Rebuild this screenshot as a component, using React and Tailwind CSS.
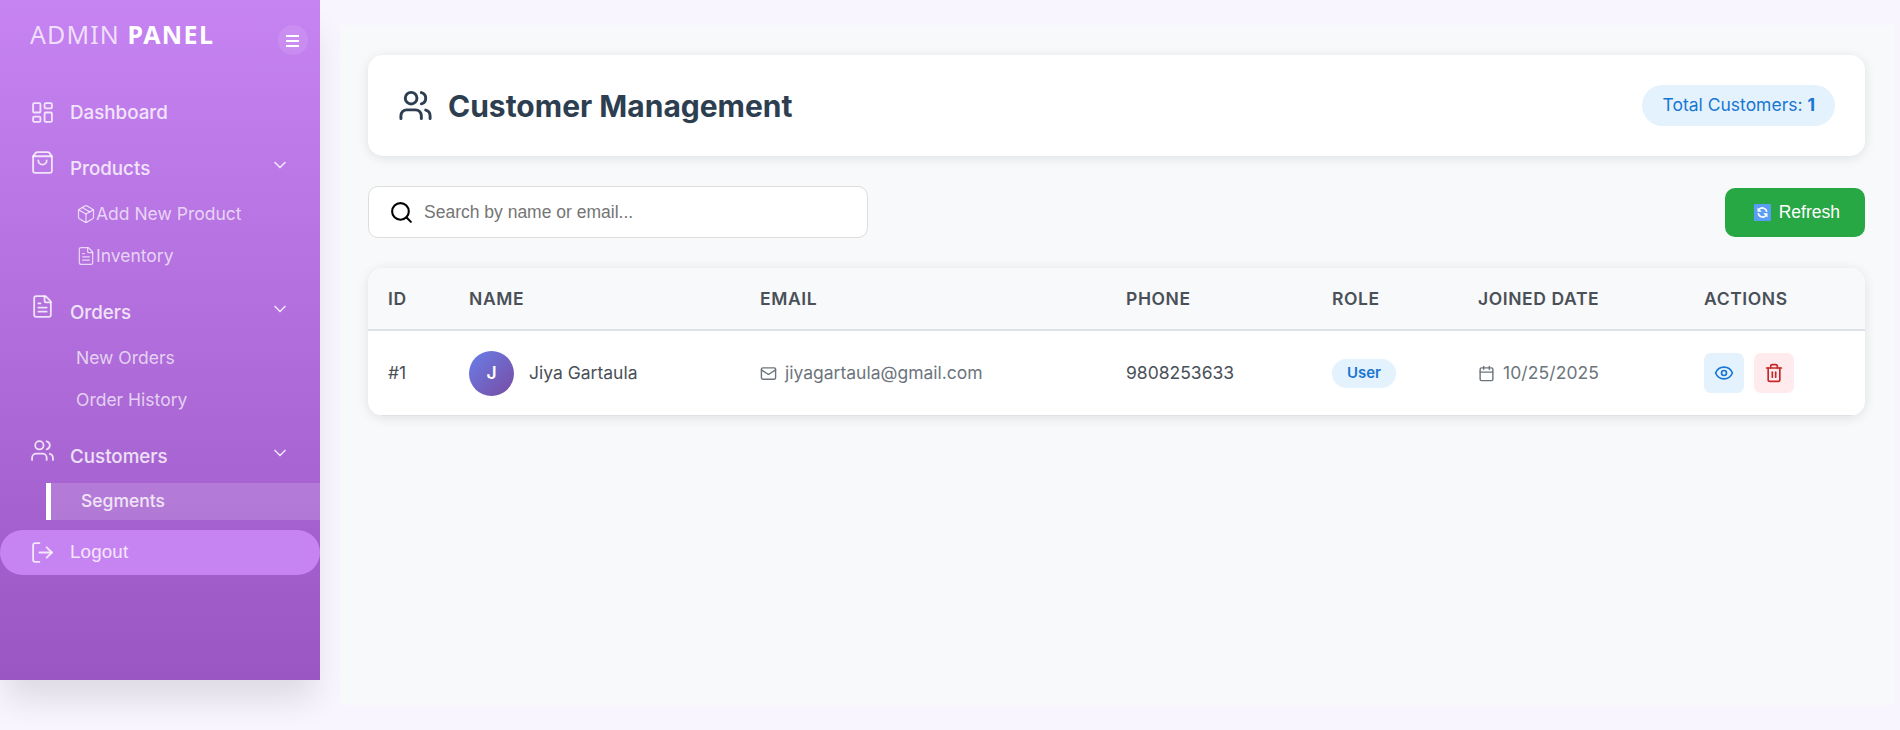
import { LayoutDashboard, ShoppingBag, Package, FileText, Users, LogOut, ChevronDown, Search, Mail, Calendar, Eye, Trash2 } from "lucide-react";

function Group({ icon: Icon, label }) {
  return (
    <div className="flex h-[54px] px-[30px]">
      <Icon className="mt-[11px] size-[25px]" strokeWidth={1.75} />
      <span className="ml-[15px] mt-[18px] text-[18.75px] font-medium leading-[24px]">{label}</span>
      <ChevronDown className="ml-auto mt-4 size-5" strokeWidth={2} />
    </div>
  );
}

function Sub({ icon: Icon, label }) {
  return (
    <div className="flex h-[42px] items-center pl-[76px] text-[17.5px] text-white/70">
      {Icon && <Icon className="size-5" strokeWidth={1.5} />}
      {label}
    </div>
  );
}

function MenuBars() {
  return (
    <svg className="mr-px mt-0.5 h-3 w-[13px]" viewBox="0 0 13 12" fill="currentColor">
      <rect width="13" height="2" />
      <rect y="5" width="13" height="2" />
      <rect y="10" width="13" height="2" />
    </svg>
  );
}

function Sidebar() {
  return (
    <aside className="flex h-[680px] w-[320px] shrink-0 flex-col bg-linear-to-b from-[#c683f2] to-[#9a57c4] text-white/80 shadow-[0_25px_31px_-6px_rgba(0,0,0,0.11)]">
      <div className="flex h-[86px] items-start justify-between pl-[30px] pr-3">
        <h1 className="mt-[18px] font-['Noto_Sans',sans-serif] text-[25px] font-normal leading-[32px] tracking-[1.1px] text-white/75">
          ADMIN <span className="font-bold tracking-[1.4px] text-white">PANEL</span>
        </h1>
        <button className="mt-[25px] flex size-[30px] items-center justify-center rounded-full bg-white/10 text-white">
          <MenuBars />
        </button>
      </div>
      <nav className="flex flex-col">
        <div className="flex h-[53px] items-center gap-[15px] pl-[30px] text-[18.75px] font-medium">
          <LayoutDashboard className="size-[25px]" strokeWidth={1.75} /><span className="pt-0.5">Dashboard</span>
        </div>
        <Group icon={ShoppingBag} label="Products" />
        <Sub icon={Package} label="Add New Product" />
        <Sub icon={FileText} label="Inventory" />
        <div className="mt-[6px]"><Group icon={FileText} label="Orders" /></div>
        <Sub label="New Orders" />
        <Sub label="Order History" />
        <div className="mt-[6px]"><Group icon={Users} label="Customers" /></div>
        <div className="ml-[46px] mt-[2px] flex h-[37px] items-center border-l-[5px] border-white bg-white/15 pl-[30px] text-[17.5px] font-medium">Segments</div>
        <div className="mt-[10px] flex h-[45px] items-center gap-[15px] rounded-full bg-[#c683f2] pl-[30px] font-['Liberation_Sans',sans-serif] text-[18.75px] tracking-[0.15px]">
          <LogOut className="size-[25px]" strokeWidth={1.75} />Logout
        </div>
      </nav>
    </aside>
  );
}

function RefreshGlyph() {
  return (
    <svg className="size-[17px]" viewBox="0 0 17 17">
      <rect width="17" height="17" rx="1" fill="#5a9df5" />
      <g fill="none" stroke="#fff" strokeWidth="1.6">
        <path d="M4.3 9.2A4.3 4.3 0 0 0 11.8 11.6" />
        <path d="M12.7 7.8A4.3 4.3 0 0 0 5.2 5.4" />
      </g>
      <path d="M3.5 3.5v4.3h4.3zM13.5 13.5V9.2H9.2z" fill="#fff" />
    </svg>
  );
}

const COLUMNS = ["ID", "NAME", "EMAIL", "PHONE", "ROLE", "JOINED DATE", "ACTIONS"];

export default function App() {
  return (
    <div className="flex h-[730px] items-start overflow-hidden bg-[#f8f5ff] font-['Inter',sans-serif]">
      <Sidebar />
      <main className="ml-5 mr-[5px] mt-[25px] flex h-[680px] flex-1 flex-col gap-[30px] bg-[#f8f9fb] pb-[30px] pl-[28px] pr-[30px] pt-[30px] text-[#495057]">
        <header className="flex h-[101px] shrink-0 items-center justify-between rounded-[15px] bg-white px-[30px] shadow-[0_2px_12px_rgba(0,0,0,0.1)]">
          <h2 className="flex items-center gap-[15px] text-[30px] font-bold text-[#2c3e50]"><Users className="size-[35px]" /><span className="pt-0.5">Customer Management</span></h2>
          <div className="flex h-[41px] items-center rounded-[25px] bg-[#e3f2fd] px-5 text-[17.5px] text-[#1976d2]"><span>Total Customers: <strong>1</strong></span></div>
        </header>
        <div className="flex h-[52px] shrink-0 items-center justify-between font-['Liberation_Sans',sans-serif]">
          <div className="flex h-[52px] w-[500px] items-center gap-[10px] rounded-[10px] border border-[#ddd] bg-white px-5">
            <Search className="size-[25px] text-black" />
            <input className="flex-1 text-[17.5px] outline-none placeholder:text-[#757575]" placeholder="Search by name or email..." />
          </div>
          <button className="flex h-[49px] w-[140px] items-center justify-end gap-2 rounded-[10px] bg-[#28a745] pr-[25px] text-[17.5px] text-white"><RefreshGlyph />Refresh</button>
        </div>
        <section className="h-[148px] shrink-0 overflow-hidden rounded-[15px] bg-white text-[17.5px] shadow-[0_2px_12px_rgba(0,0,0,0.1)]">
          <div className="grid h-[63px] grid-cols-[81px_291px_366px_206px_146px_226px_1fr] items-center border-b-2 border-[#dee2e6] bg-[#f8f9fb] pl-5 pt-px font-semibold tracking-[0.6px]">
            {COLUMNS.map((h) => <div key={h}>{h}</div>)}
          </div>
          <div className="grid h-[85px] grid-cols-[81px_291px_366px_206px_146px_226px_1fr] items-center border-b border-[#dee2e6] pl-5">
            <div>#1</div>
            <div className="flex items-center gap-[15px]">
              <span className="flex size-[45px] items-center justify-center rounded-full bg-linear-135 from-[#667eea] to-[#764ba2] font-semibold text-white">J</span>Jiya Gartaula
            </div>
            <div className="flex items-center gap-2 text-[#6c757d]"><Mail className="size-[17px]" />jiyagartaula@gmail.com</div>
            <div>9808253633</div>
            <div><span className="flex h-[29px] w-[64px] items-center justify-center rounded-full bg-[#e3f2fd] text-[15px] font-semibold text-[#1976d2]">User</span></div>
            <div className="flex items-center gap-2 tracking-[0.1px] text-[#6c757d]"><Calendar className="size-[17px]" />10/25/2025</div>
            <div className="flex gap-[10px]">
              <button className="flex size-10 items-center justify-center rounded-[7px] bg-[#e3f2fd] text-[#1976d2]"><Eye className="size-5" /></button>
              <button className="flex size-10 items-center justify-center rounded-[7px] bg-[#ffebee] text-[#c62828]"><Trash2 className="size-5" /></button>
            </div>
          </div>
        </section>
      </main>
    </div>
  );
}
